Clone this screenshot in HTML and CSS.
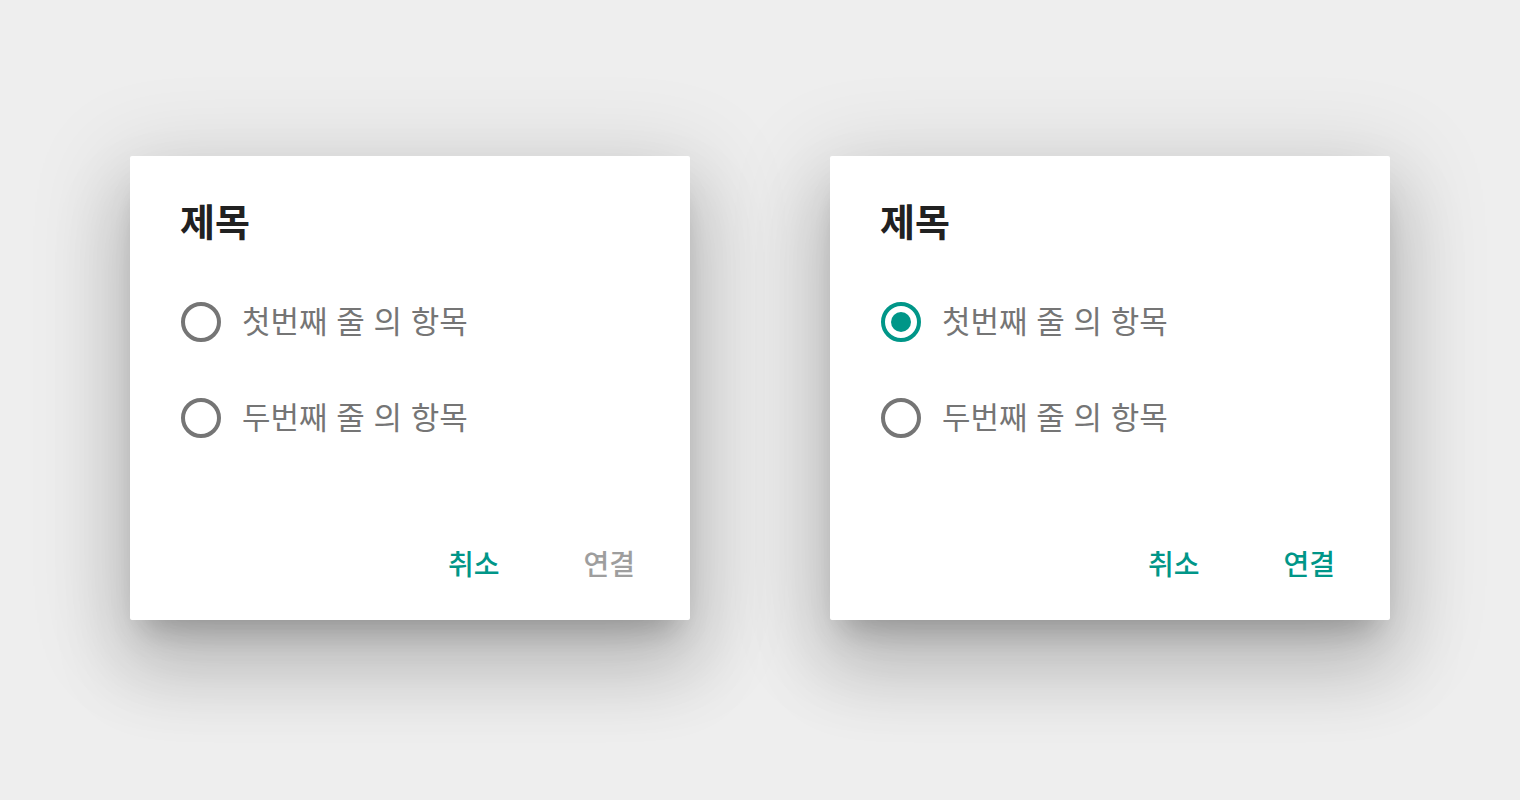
FILE: index.html
```html
<!DOCTYPE html>
<html lang="ko">
<head>
  <meta charset="UTF-8">
  <title>Dialog</title>
  <link rel="stylesheet" href="styles.css">
</head>
<body>
  <div class="stage">
    <div class="dialog">
      <h2 class="title">제목</h2>
      <div class="options">
        <label class="option">
          <span class="radio"></span>
          <span class="option-text">첫번째 줄 의 항목</span>
        </label>
        <label class="option">
          <span class="radio"></span>
          <span class="option-text">두번째 줄 의 항목</span>
        </label>
      </div>
      <div class="actions">
        <button class="btn">취소</button>
        <button class="btn disabled">연결</button>
      </div>
    </div>

    <div class="dialog">
      <h2 class="title">제목</h2>
      <div class="options">
        <label class="option">
          <span class="radio checked"></span>
          <span class="option-text">첫번째 줄 의 항목</span>
        </label>
        <label class="option">
          <span class="radio"></span>
          <span class="option-text">두번째 줄 의 항목</span>
        </label>
      </div>
      <div class="actions">
        <button class="btn">취소</button>
        <button class="btn">연결</button>
      </div>
    </div>
  </div>
</body>
</html>
```

FILE: styles.css
```css
html, body {
  margin: 0;
  height: 100%;
}
body {
  background-color: #eeeeee;
  font-family: "Noto Sans CJK KR", "Noto Sans", sans-serif;
}
.stage {
  display: flex;
  justify-content: center;
  gap: 140px;
  padding-top: 156px;
}
.dialog {
  width: 560px;
  height: 464px;
  box-sizing: border-box;
  padding: 40px 0 0 50px;
  background: #fff;
  border-radius: 2px;
  display: flex;
  flex-direction: column;
  box-shadow: 0 48px 76px 6px rgba(0, 0, 0, 0.14),
              0 18px 92px 16px rgba(0, 0, 0, 0.12),
              0 22px 30px -14px rgba(0, 0, 0, 0.22);
}
.title {
  margin: 0;
  font-size: 38px;
  line-height: 48px;
  font-weight: 700;
  color: #212121;
}
.options {
  margin-top: 30px;
}
.option {
  display: flex;
  align-items: center;
  height: 96px;
  gap: 21px;
}
.radio {
  width: 40px;
  height: 40px;
  margin-left: 1px;
  box-sizing: border-box;
  border: 4px solid #757575;
  border-radius: 50%;
  display: flex;
  align-items: center;
  justify-content: center;
}
.radio.checked {
  border-color: #009688;
}
.radio.checked::after {
  content: "";
  width: 20px;
  height: 20px;
  border-radius: 50%;
  background: #009688;
}
.option-text {
  font-size: 31px;
  color: #757575;
  margin-bottom: 5px;
}
.actions {
  margin-top: auto;
  display: flex;
  justify-content: flex-end;
  gap: 52px;
  padding: 0 39px 29px 0;
}
.btn {
  height: 56px;
  padding: 0 16px;
  border: none;
  background: none;
  font-family: inherit;
  font-size: 28px;
  font-weight: 500;
  color: #009688;
  cursor: pointer;
}
.btn.disabled {
  color: #9e9e9e;
}
```
